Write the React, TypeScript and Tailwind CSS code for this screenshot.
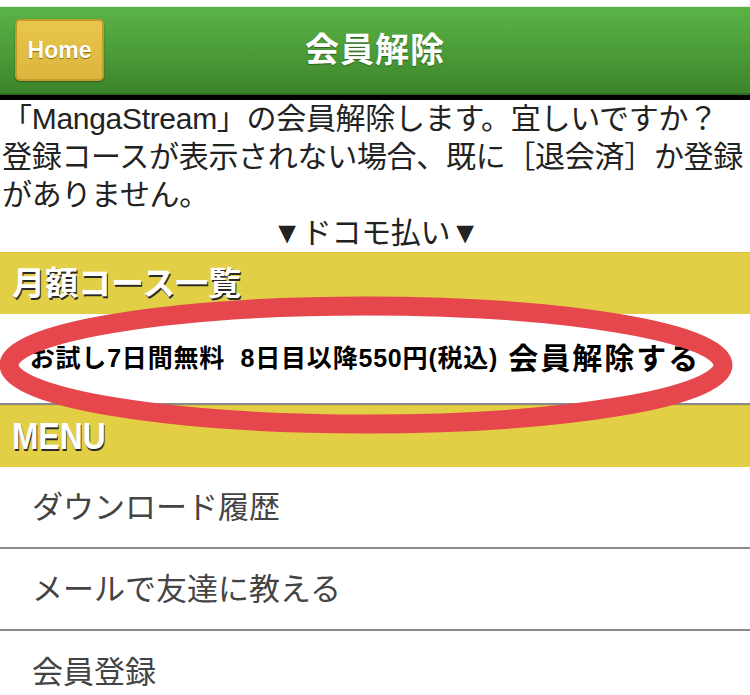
import React from 'react';

const menuItems = ['ダウンロード履歴', 'メールで友達に教える', '会員登録'];

function SectionBar({ label, latin }: { label: string; latin?: boolean }) {
  return (
    <div className="h-[62px] bg-[#e2cf45] border-t border-[#d8c23a] flex items-center pl-[12px]">
      <span
        className={`inline-block text-white font-bold leading-none [text-shadow:1px_2px_0_#2a2a2a] ${
          latin ? 'text-[37px] scale-x-[0.86] origin-left' : 'text-[33px]'
        }`}
      >
        {label}
      </span>
    </div>
  );
}

export default function App() {
  return (
    <div className="relative w-[750px] h-[695px] overflow-hidden bg-white font-['Liberation_Sans','Noto_Sans_CJK_JP',sans-serif]">
      {/* header */}
      <div className="h-[7px] bg-white border-b border-[#e6e6e6]" />
      <div className="h-[88px] bg-gradient-to-b from-[#5bb346] via-[#4c9d39] to-[#3b852b] border-b-[2px] border-[#2f6d22] flex items-center relative">
        <div className="ml-[15px] w-[89px] h-[62px] rounded-[5px] border-2 border-[#c49a2c] bg-gradient-to-b from-[#e9c64c] to-[#dcb53c] flex items-center justify-center shadow-[0_1px_2px_rgba(0,0,0,0.35)]">
          <span className="text-white font-bold text-[23px] [text-shadow:0_1px_1px_#8a6a10]">Home</span>
        </div>
        <div className="absolute inset-0 flex items-center justify-center pointer-events-none">
          <span className="text-white font-bold text-[34px] tracking-[1px] [text-shadow:0_1px_1px_#2d5f20]">会員解除</span>
        </div>
      </div>
      <div className="h-[5px] bg-black" />

      {/* notice */}
      <div className="text-[30px] leading-[38px] text-[#222] whitespace-nowrap pl-[2px] tracking-[-0.3px]">
        <div>「MangaStream」の会員解除します。宜しいですか？</div>
        <div>登録コースが表示されない場合、既に［退会済］か登録</div>
        <div>がありません。</div>
        <div className="text-center leading-[38px]">▼ドコモ払い▼</div>
      </div>

      <SectionBar label="月額コース一覧" />

      {/* course row */}
      <div className="h-[91px] flex items-center justify-center border-b-[2px] border-[#8a8a8a] text-black whitespace-nowrap pr-[20px]">
        <span className="font-bold text-[25px] tracking-[0.8px]">お試し7日間無料&nbsp;&nbsp;8日目以降550円(税込)</span>
        <span className="ml-[10px] font-bold text-[30px] tracking-[2px]">会員解除する</span>
      </div>

      <SectionBar label="MENU" latin />

      {/* menu */}
      <div>
        {menuItems.map((item, i) => (
          <div
            key={item}
            className={`h-[82px] flex items-center pl-[32px] pt-[3px] text-[31px] text-[#444] ${
              i < menuItems.length - 1 ? 'border-b-[2px] border-[#8a8a8a]' : ''
            }`}
          >
            {item}
          </div>
        ))}
      </div>

      {/* red annotation ellipse */}
      <svg className="absolute left-0 top-0 pointer-events-none" width="750" height="695">
        <ellipse cx="366" cy="365" rx="357" ry="59" fill="none" stroke="#e5474c" strokeWidth="19" />
      </svg>
    </div>
  );
}
